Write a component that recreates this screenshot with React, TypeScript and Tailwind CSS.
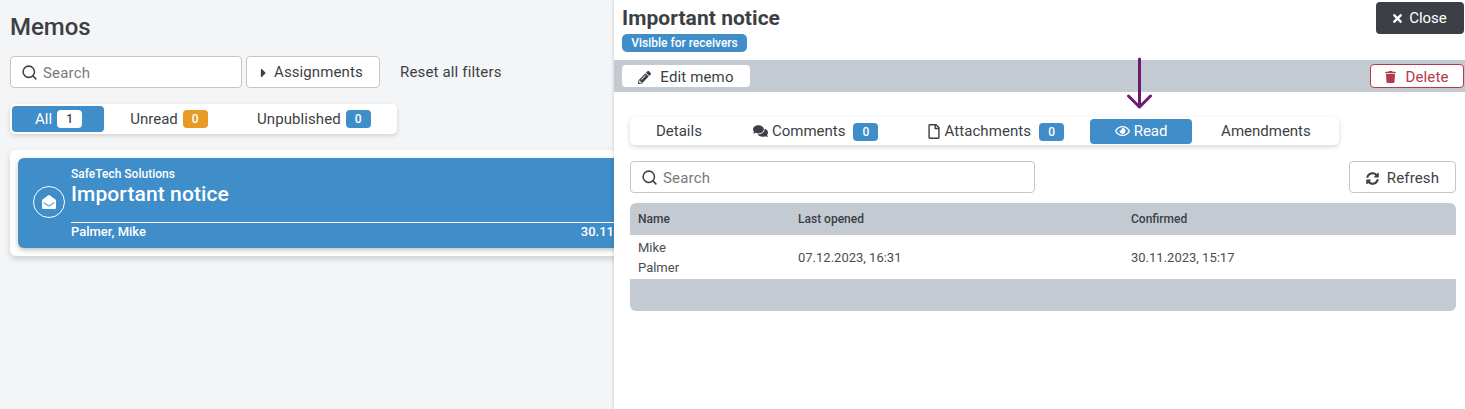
import { Search } from 'lucide-react'
import { FaCaretRight, FaEnvelopeOpen, FaComments, FaRegEye, FaRegFile, FaPencilAlt, FaSyncAlt, FaTimes, FaTrash } from 'react-icons/fa'

const font = { fontFamily: 'Roboto, sans-serif' }

function Badge({ value, color }: { value: number; color: string }) {
  return (
    <span className={`inline-flex h-[18px] w-[25px] items-center justify-center rounded-[4px] text-[12px] font-medium ${color}`}>
      {value}
    </span>
  )
}

function SearchBox({ width }: { width: string }) {
  return (
    <div className={`flex h-8 items-center rounded-[4px] border border-[#c4c7ca] bg-white pl-[10px] ${width}`}>
      <Search className="mr-[5px] h-[17px] w-[17px] text-[#3c3f46]" strokeWidth={2.2} />
      <span className="pt-[2px] text-[15px] tracking-[0.2px] text-[#777a80]">Search</span>
    </div>
  )
}

export default function App() {
  return (
    <div style={font} className="relative flex h-[409px] w-[1465px] overflow-hidden bg-white text-[#3c3f46]">
      <aside className="h-full w-[614px] shrink-0 overflow-hidden bg-[#f3f5f7] pl-[10px]">
        <h1 className="mt-[13px] text-[24px] leading-7 font-medium">Memos</h1>
        <div className="mt-[15px] flex items-center">
          <SearchBox width="w-[232px]" />
          <button className="ml-[4px] flex h-8 w-[134px] items-center rounded-[4px] border border-[#c4c7ca] bg-white pl-[13px] pt-px text-[15px] tracking-[0.1px]">
            <FaCaretRight className="mr-[7px] h-[14px] w-[7px]" />
            Assignments
          </button>
          <span className="ml-5 pt-px text-[15px] tracking-[0.16px]">Reset all filters</span>
        </div>
        <div className="mt-4 flex h-[30px] w-[387px] items-center rounded-[5px] bg-white pl-[2px] text-[15px] shadow-[0_2px_5px_rgba(0,0,0,0.14)]">
          <div className="flex h-[26px] w-[92px] items-center justify-center gap-[5px] rounded-[4px] bg-[#3f8dc9] pl-px text-white">
            All <Badge value={1} color="w-[23px] bg-white text-[#3c3f46]" />
          </div>
          <div className="flex w-[130px] items-center justify-center gap-[5px]">
            Unread <Badge value={0} color="bg-[#e79a24] text-white" />
          </div>
          <div className="ml-[23px] flex items-center gap-[5px] tracking-[0.08px]">
            Unpublished <Badge value={0} color="bg-[#3f8dc9] text-white" />
          </div>
        </div>
        <div className="mt-4 h-[106px] w-[640px] rounded-[6px] bg-white p-2 shadow-[0_3px_6px_rgba(0,0,0,0.16)]">
          <div className="flex h-[90px] rounded-[6px] bg-[#3f8dc9] text-white shadow-[0_2px_5px_rgba(0,0,0,0.25)]">
            <div className="flex w-[53px] shrink-0 items-center justify-end pr-[6px] pb-[2px]">
              <div className="flex h-[32px] w-[32px] items-center justify-center rounded-full border border-white">
                <FaEnvelopeOpen className="h-[14px] w-[14px]" />
              </div>
            </div>
            <div className="min-w-0 flex-1">
              <div className="mt-[9px] text-[12px] leading-[14px] font-medium">SafeTech Solutions</div>
              <div className="mt-0 text-[21px] leading-[26px] font-medium tracking-[0.1px]">Important notice</div>
              <div className="mt-[15px] flex justify-between border-t border-white pr-[28px] pt-px text-[13px] leading-[16px] font-medium">
                <span>Palmer, Mike</span>
                <span>30.11</span>
              </div>
            </div>
          </div>
        </div>
      </aside>

      <main className="h-full min-w-0 flex-1 bg-white shadow-[-1px_0_3px_rgba(0,0,0,0.12)]">
        <header className="flex h-[60px] items-start justify-between pl-2 pr-px">
          <div>
            <h2 className="mt-[5px] text-[21px] leading-[26px] font-bold tracking-[0.05px]">Important notice</h2>
            <span className="mt-[3px] flex h-[18px] w-[125px] items-center justify-center rounded-[5px] bg-[#3f8dc9] text-[12px] font-medium text-white">
              Visible for receivers
            </span>
          </div>
          <button className="mt-[2px] flex h-8 w-[88px] items-center justify-center gap-[5px] rounded-[4px] bg-[#3c3f46] pr-[2px] text-[15px] text-white">
            <FaTimes className="h-[13px] w-[13px]" />
            Close
          </button>
        </header>

        <div className="flex h-8 items-center justify-between bg-[#c4cad1] pl-2 pr-px">
          <button className="flex h-[22px] w-[128px] items-center justify-center gap-[9px] rounded-[4px] bg-white pt-[2px] text-[15px] tracking-[0.15px]">
            <FaPencilAlt className="h-[13px] w-[13px]" />
            Edit memo
          </button>
          <button className="flex h-6 w-[94px] items-center justify-center gap-[9px] rounded-[4px] border border-[#b33a4a] bg-white pt-[2px] text-[15px] tracking-[0.15px] text-[#b33a4a]">
            <FaTrash className="h-[12px] w-[11px]" />
            Delete
          </button>
        </div>

        <div className="pl-[16px] pr-[9px]">
          <div className="mt-[25px] flex h-[28px] w-[709px] items-center rounded-[5px] bg-white text-[15px] shadow-[0_2px_5px_rgba(0,0,0,0.16)]">
            <span className="ml-[26px]">Details</span>
            <span className="ml-[51px] flex items-center">
              <FaComments className="mr-[4px] h-[14px] w-[15px]" />
              Comments
              <span className="ml-2"><Badge value={0} color="bg-[#3f8dc9] text-white" /></span>
            </span>
            <span className="ml-[50px] flex items-center">
              <FaRegFile className="mr-[4px] h-[15px] w-[12px]" />
              <span className="tracking-[0.08px]">Attachments</span>
              <span className="ml-2"><Badge value={0} color="bg-[#3f8dc9] text-white" /></span>
            </span>
            <span className="ml-[26px] flex h-[25px] w-[102px] items-center justify-center gap-[4px] rounded-[4px] bg-[#3f8dc9] text-white">
              <FaRegEye className="h-[14px] w-[15px]" />
              Read
            </span>
            <span className="ml-[29px]">Amendments</span>
          </div>

          <div className="mt-4 flex items-center justify-between">
            <SearchBox width="w-[405px]" />
            <button className="flex h-8 w-[107px] items-center justify-center gap-2 rounded-[4px] border border-[#c4c7ca] bg-white pt-[2px] text-[15px] tracking-[0.15px]">
              <FaSyncAlt className="h-[13px] w-[13px]" />
              Refresh
            </button>
          </div>

          <div className="mt-[10px] overflow-hidden rounded-[6px] text-[13px]">
            <div className="grid h-8 grid-cols-[160px_333px_1fr] items-center bg-[#c4cad1] pl-2 text-[12px] font-medium">
              <span>Name</span>
              <span>Last opened</span>
              <span>Confirmed</span>
            </div>
            <div className="grid h-[44px] grid-cols-[160px_333px_1fr] items-center bg-white pl-2 pt-px text-[#4a4d53]">
              <span className="leading-[20px]">Mike<br />Palmer</span>
              <span>07.12.2023, 16:31</span>
              <span>30.11.2023, 15:17</span>
            </div>
            <div className="h-8 bg-[#c4cad1]" />
          </div>
        </div>
      </main>

      <svg className="absolute left-[1126px] top-[57px]" width="28" height="52" viewBox="0 0 28 52" fill="none" stroke="#6e1a70" strokeWidth="3" strokeLinecap="round" strokeLinejoin="round">
        <path d="M13.5 2V50M2.5 39L13.5 50L24.5 39" />
      </svg>
    </div>
  )
}
